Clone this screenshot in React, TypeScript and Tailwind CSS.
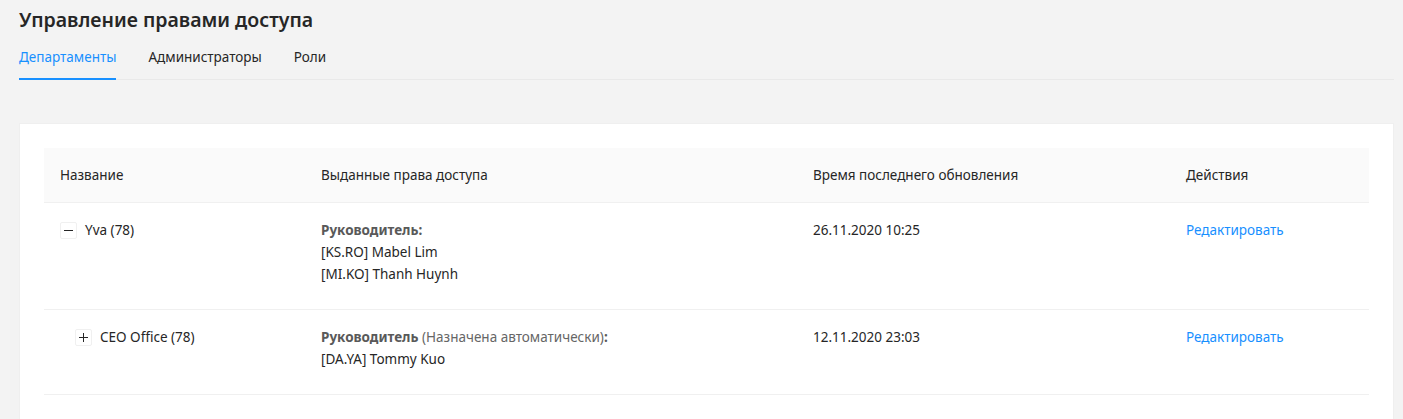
import React from 'react';

type Row = {
  name: string;
  level: number;
  expanded: boolean;
  auto: boolean;
  people: string[];
  updated: string;
};

const rows: Row[] = [
  {
    name: 'Yva (78)',
    level: 0,
    expanded: true,
    auto: false,
    people: ['[KS.RO] Mabel Lim', '[MI.KO] Thanh Huynh'],
    updated: '26.11.2020 10:25',
  },
  {
    name: 'CEO Office (78)',
    level: 1,
    expanded: false,
    auto: true,
    people: ['[DA.YA] Tommy Kuo'],
    updated: '12.11.2020 23:03',
  },
];

const ExpandIcon = ({ expanded }: { expanded: boolean }) => (
  <span className="relative inline-block w-[17px] h-[17px] shrink-0 border border-[#f0f0f0] rounded-[2px] bg-white">
    <span className="absolute left-[3px] right-[3px] top-[7px] h-px bg-[#262626]" />
    {!expanded && <span className="absolute top-[3px] bottom-[3px] left-[7px] w-px bg-[#262626]" />}
  </span>
);

const cols = 'grid grid-cols-[261px_492px_373px_1fr]';

const App = () => {
  return (
    <div className="min-h-screen bg-[#f3f3f3] pl-[19px] pr-[9px] pt-[6px] font-['Noto_Sans','Open_Sans',sans-serif] text-[13.5px] leading-[22px] text-[#262626]">
      <h1 className="text-[19.5px] leading-[28px] font-semibold text-[#262626]">Управление правами доступа</h1>

      <div className="mt-[12px] flex gap-8 border-b border-[#e9e9e9]">
        <div className="pb-[9px] border-b-2 border-[#1890ff] text-[#1890ff] -mb-px">Департаменты</div>
        <div className="pb-[11px]">Администраторы</div>
        <div className="pb-[11px]">Роли</div>
      </div>

      <div className="mt-[43px] bg-white border border-[#efefef] border-b-0 px-6 pt-6 h-[296px]">
        <div className={`${cols} bg-[#fafafa] border-b border-[#f0f0f0]`}>
          <div className="p-4">Название</div>
          <div className="p-4">Выданные права доступа</div>
          <div className="p-4">Время последнего обновления</div>
          <div className="p-4">Действия</div>
        </div>

        {rows.map((r) => (
          <div key={r.name} className={`${cols} border-b border-[#f0f0f0]`}>
            <div className="px-4 pt-4 pb-6">
              <div className="flex items-center gap-2" style={{ paddingLeft: r.level * 15 }}>
                <ExpandIcon expanded={r.expanded} />
                <span>{r.name}</span>
              </div>
            </div>
            <div className="px-4 pt-4 pb-6">
              <div className="text-[#595959]">
                <span className="font-bold">Руководитель</span>
                {r.auto && <span className="text-[#666666]"> (Назначена автоматически)</span>}
                <span className="font-bold">:</span>
              </div>
              {r.people.map((p) => (
                <div key={p}>{p}</div>
              ))}
            </div>
            <div className="px-4 pt-4 pb-6">{r.updated}</div>
            <div className="px-4 pt-4 pb-6">
              <span className="text-[#1890ff]">Редактировать</span>
            </div>
          </div>
        ))}
      </div>
    </div>
  );
};

export default App;
